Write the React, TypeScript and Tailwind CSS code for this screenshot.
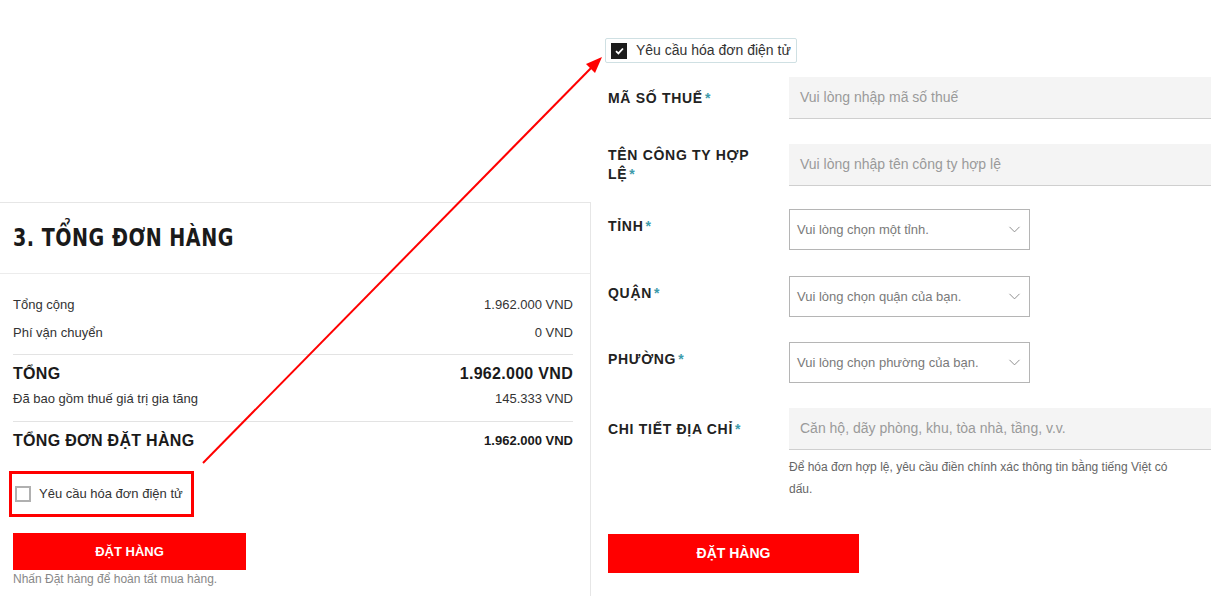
import { ChevronDown } from "lucide-react";

const font = { fontFamily: '"Liberation Sans", Arial, sans-serif' };

function Label({ text, select }: { text: React.ReactNode; select?: boolean }) {
  return (
    <div
      className={`w-[181px] shrink-0 pr-4 text-[14px] font-bold uppercase leading-[19px] text-[#222] ${
        select ? "pb-[7px]" : ""
      }`}
    >
      <span className="tracking-[0.7px]">{text}</span>
      <span className="ml-[2px] text-[#3d9bab]">*</span>
    </div>
  );
}

function TextInput({ placeholder }: { placeholder: string }) {
  return (
    <div className="flex h-[42px] w-[422px] items-center border-b border-[#cfcfcf] bg-[#f4f4f4] px-[11px] text-[14px] text-[#9a9a9a]">
      {placeholder}
    </div>
  );
}

function SelectBox({ placeholder }: { placeholder: string }) {
  return (
    <div className="flex h-[41px] w-[241px] items-center justify-between border border-[#b5b5b5] bg-white pl-[7px] pr-[5px] text-[13px] text-[#7a7a7a]">
      <span>{placeholder}</span>
      <ChevronDown size={19} strokeWidth={1.2} color="#8a8a8a" />
    </div>
  );
}

function SummaryRow({ label, value }: { label: string; value: string }) {
  return (
    <div className="flex h-[28px] items-center justify-between text-[13px] text-[#333]">
      <span>{label}</span>
      <span>{value}</span>
    </div>
  );
}

export default function App() {
  return (
    <div className="relative flex h-[596px] w-[1217px] overflow-hidden bg-white" style={font}>
      {/* left: order summary */}
      <div className="w-[591px] shrink-0 pt-[202px]">
        <div className="h-full border-t border-r border-[#e6e6e6]">
          <div className="flex h-[71px] items-center border-b border-[#ececec] px-[13px]">
            <h2
              className="whitespace-nowrap text-[25px] font-bold tracking-[0.6px] text-[#1a1a1a]"
              style={{ fontFamily: '"DejaVu Sans Condensed", "DejaVu Sans", sans-serif', transform: "scaleX(0.85)", transformOrigin: "left" }}
            >
              3. TỔNG ĐƠN HÀNG
            </h2>
          </div>
          <div className="pl-[13px] pr-[17px]">
            <div className="pt-[17px] pb-[7px]">
              <SummaryRow label="Tổng cộng" value="1.962.000 VND" />
              <SummaryRow label="Phí vận chuyển" value="0 VND" />
            </div>
            <div className="border-t border-[#e3e3e3] pt-[10px] pb-[14px]">
              <div className="flex items-center justify-between text-[16px] font-bold leading-[18px] tracking-[0.3px] text-[#1a1a1a]">
                <span>TỔNG</span>
                <span>1.962.000 VND</span>
              </div>
              <div className="mt-[8px] flex items-center justify-between text-[13px] leading-[16px] text-[#333]">
                <span>Đã bao gồm thuế giá trị gia tăng</span>
                <span>145.333 VND</span>
              </div>
            </div>
            <div className="flex items-center justify-between border-t border-[#e3e3e3] pt-[10px] leading-[18px] text-[#1a1a1a]">
              <span className="text-[16px] font-bold tracking-[0.3px]">TỔNG ĐƠN ĐẶT HÀNG</span>
              <span className="text-[13px] font-bold">1.962.000 VND</span>
            </div>
            <div className="ml-[-4px] mt-[21px] flex h-[46px] w-[185px] items-center gap-[8px] border-[3px] border-[#ff0000] pl-[3px]">
              <span className="h-[16px] w-[16px] border-2 border-[#b0b0b0] bg-white" />
              <span className="text-[13px] text-[#333]">Yêu cầu hóa đơn điện tử</span>
            </div>
            <button className="mt-[16px] flex h-[37px] w-[233px] items-center justify-center bg-[#ff0000] text-[13px] font-bold text-white">
              ĐẶT HÀNG
            </button>
            <p className="mt-[1px] text-[12px] leading-[16px] text-[#888]">Nhấn Đặt hàng để hoàn tất mua hàng.</p>
          </div>
        </div>
      </div>

      {/* right: e-invoice form */}
      <div className="flex-1 pl-[14px] pt-[38px]">
        <div className="flex h-[25px] w-[192px] items-center gap-[9px] rounded-[2px] border border-[#cfe0e3] pl-[5px]">
          <span className="flex h-[16px] w-[16px] items-center justify-center bg-[#1c1c1c]">
            <svg width="9" height="8" viewBox="0 0 9 8" fill="none">
              <path d="M1 4.2 L3.4 6.4 L8 1.5" stroke="white" strokeWidth="1.8" />
            </svg>
          </span>
          <span className="text-[14px] text-[#333]">Yêu cầu hóa đơn điện tử</span>
        </div>

        <div className="ml-[3px] mt-[14px] flex flex-col">
          <div className="flex items-center">
            <Label text="Mã số thuế" />
            <TextInput placeholder="Vui lòng nhập mã số thuế" />
          </div>
          <div className="mt-[25px] flex items-center">
            <Label text="Tên công ty hợp lệ" />
            <TextInput placeholder="Vui lòng nhập tên công ty hợp lệ" />
          </div>
          <div className="mt-[23px] flex items-center">
            <Label text="Tỉnh" select />
            <SelectBox placeholder="Vui lòng chọn một tỉnh." />
          </div>
          <div className="mt-[26px] flex items-center">
            <Label text="Quận" select />
            <SelectBox placeholder="Vui lòng chọn quận của bạn." />
          </div>
          <div className="mt-[25px] flex items-center">
            <Label text="Phường" select />
            <SelectBox placeholder="Vui lòng chọn phường của bạn." />
          </div>
          <div className="mt-[25px] flex items-center">
            <Label text="Chi tiết địa chỉ" />
            <TextInput placeholder="Căn hộ, dãy phòng, khu, tòa nhà, tầng, v.v." />
          </div>
          <p className="ml-[181px] mt-[6px] w-[400px] text-[12px] leading-[22px] text-[#666]">
            Để hóa đơn hợp lệ, yêu cầu điền chính xác thông tin bằng tiếng Việt có dấu.
          </p>
          <button className="mt-[34px] flex h-[39px] w-[251px] items-center justify-center bg-[#ff0000] text-[14px] font-bold text-white">
            ĐẶT HÀNG
          </button>
        </div>
      </div>

      {/* annotation arrow */}
      <svg className="pointer-events-none absolute left-0 top-0" width="1217" height="596">
        <line x1="203" y1="463" x2="594" y2="65" stroke="#ff0000" strokeWidth="2" />
        <polygon points="602,57 586,64 595,73" fill="#ff0000" />
      </svg>
    </div>
  );
}
